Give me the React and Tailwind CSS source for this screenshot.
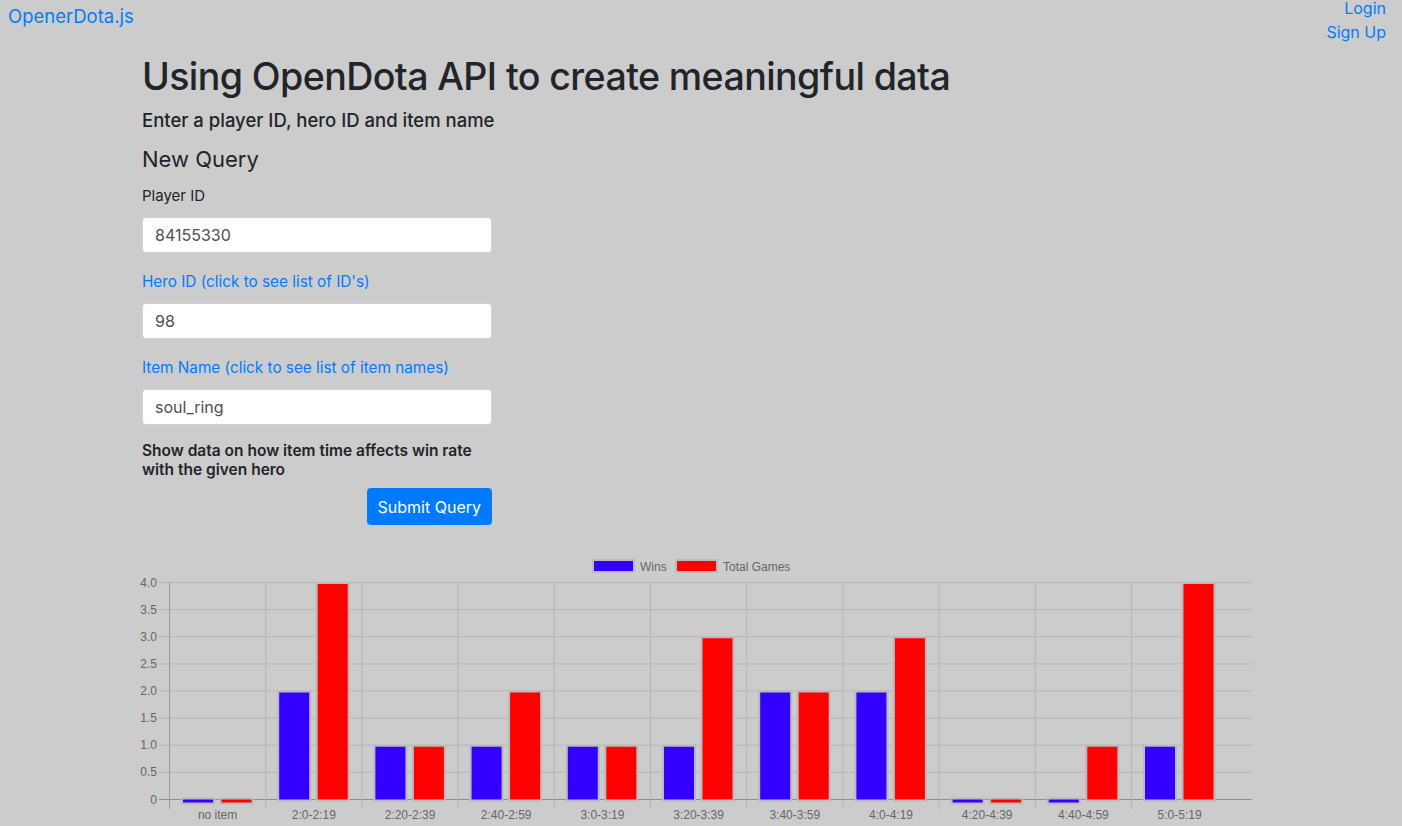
import React from "react";

const labels = [
  "no item",
  "2:0-2:19",
  "2:20-2:39",
  "2:40-2:59",
  "3:0-3:19",
  "3:20-3:39",
  "3:40-3:59",
  "4:0-4:19",
  "4:20-4:39",
  "4:40-4:59",
  "5:0-5:19",
];
const wins = [0, 2, 1, 1, 1, 1, 2, 2, 0, 0, 1];
const totals = [0, 4, 1, 2, 1, 3, 2, 3, 0, 1, 4];

// chart geometry (page coordinates)
const X0 = 169.5;
const CAT = 96.2;
const RIGHT = 1252;
const TOP = 582.5;
const ZERO = 799.5;
const UNIT = (ZERO - TOP) / 4;
const OFF = 552;

function Bar({ x, value, color }) {
  const h = value === 0 ? 3 : value * UNIT - 1.5;
  const y = value === 0 ? ZERO : ZERO - h;
  return (
    <g>
      <rect x={x - 2} y={y - 2} width={34} height={h + 4} fill="#bababa" />
      <rect x={x} y={y} width={30} height={h} fill={color} />
    </g>
  );
}

function Chart() {
  const ticks = [0, 0.5, 1, 1.5, 2, 2.5, 3, 3.5, 4];
  return (
    <svg width="1402" height="274" className="block">
      <g transform={`translate(0,-${OFF})`}>
        {/* legend */}
        <rect x="592" y="559" width="43" height="14" fill="#bababa" />
        <rect x="594" y="561" width="39" height="10" fill="#3300ff" />
        <text x="640" y="570.5" fontSize="12" fill="#666" fontFamily="'Liberation Sans', Arial, sans-serif">
          Wins
        </text>
        <rect x="675" y="559" width="43" height="14" fill="#bababa" />
        <rect x="677" y="561" width="39" height="10" fill="#ff0000" />
        <text x="723" y="570.5" fontSize="12" fill="#666" fontFamily="'Liberation Sans', Arial, sans-serif">
          Total Games
        </text>

        {/* horizontal grid */}
        {ticks.map((t) => {
          const y = ZERO - t * UNIT;
          return (
            <g key={t}>
              <line
                x1="159"
                x2={RIGHT}
                y1={y}
                y2={y}
                stroke={t === 0 ? "#8f8f8f" : "#b5b5b5"}
                strokeWidth="1"
              />
              <text
                x="157"
                y={y + 4}
                textAnchor="end"
                fontSize="12"
                fill="#666"
                fontFamily="'Liberation Sans', Arial, sans-serif"
              >
                {t === 0 ? "0" : t.toFixed(1)}
              </text>
            </g>
          );
        })}

        {/* vertical grid */}
        {labels.map((l, i) => {
          const x = X0 + i * CAT;
          return (
            <line
              key={l}
              x1={x}
              x2={x}
              y1={TOP}
              y2="809"
              stroke={i === 0 ? "#9a9a9a" : "#b5b5b5"}
              strokeWidth="1"
            />
          );
        })}

        {/* bars */}
        {labels.map((l, i) => {
          const x = X0 + i * CAT;
          return (
            <g key={l}>
              <Bar x={x + 13.5} value={wins[i]} color="#3300ff" />
              <Bar x={x + 52} value={totals[i]} color="#ff0000" />
              <text
                x={x + CAT / 2}
                y="819"
                textAnchor="middle"
                fontSize="12"
                fill="#666"
                fontFamily="'Liberation Sans', Arial, sans-serif"
              >
                {l}
              </text>
            </g>
          );
        })}
      </g>
    </svg>
  );
}

export default function App() {
  return (
    <div className="min-h-[826px] bg-[#cccccc] font-['Inter','Noto_Sans',sans-serif] text-[#212529]">
      <nav className="flex h-12 items-start justify-between">
        <a className="pl-2 pt-px text-[18.5px] leading-[30px] text-[#007bff]">OpenerDota.js</a>
        <div className="-mt-1 flex flex-col items-end pr-4 text-[16px] leading-6 text-[#007bff]">
          <a>Login</a>
          <a>Sign Up</a>
        </div>
      </nav>

      <div className="px-[142px]">
        <h1 className="mt-[5px] text-[37.6px] font-medium leading-[48px] tracking-[-0.6px]">
          Using OpenDota API to create meaningful data
        </h1>
        <h5 className="mt-[7px] text-[18.5px] font-medium leading-6">
          Enter a player ID, hero ID and item name
        </h5>
        <h4 className="mt-[13px] text-[22px] leading-[28px]">New Query</h4>

        <form className="w-[350px]" onSubmit={(e) => e.preventDefault()}>
          <label className="mt-[11px] block text-[15px] leading-6">Player ID</label>
          <input
            className="mt-[9px] block h-9 w-full rounded border border-[#ced4da] bg-white px-3 text-[16px] text-[#495057] outline-none"
            defaultValue="84155330"
          />
          <a className="mt-[17px] block text-[15.3px] leading-6 text-[#007bff]">
            Hero ID (click to see list of ID's)
          </a>
          <input
            className="mt-[9px] block h-9 w-full rounded border border-[#ced4da] bg-white px-3 text-[16px] text-[#495057] outline-none"
            defaultValue="98"
          />
          <a className="mt-[17px] block text-[15.3px] leading-6 text-[#007bff]">
            Item Name (click to see list of item names)
          </a>
          <input
            className="mt-[9px] block h-9 w-full rounded border border-[#ced4da] bg-white px-3 text-[16px] text-[#495057] outline-none"
            defaultValue="soul_ring"
          />
          <p className="mt-4 text-[15.5px] font-semibold leading-[19px]">
            Show data on how item time affects win rate with the given hero
          </p>
          <div className="mt-[9px] flex justify-end">
            <button
              type="submit"
              className="h-[37px] rounded bg-[#007bff] px-[11px] text-[16px] text-white"
            >
              Submit Query
            </button>
          </div>
        </form>
      </div>

      <div className="mt-[27px]">
        <Chart />
      </div>
    </div>
  );
}
